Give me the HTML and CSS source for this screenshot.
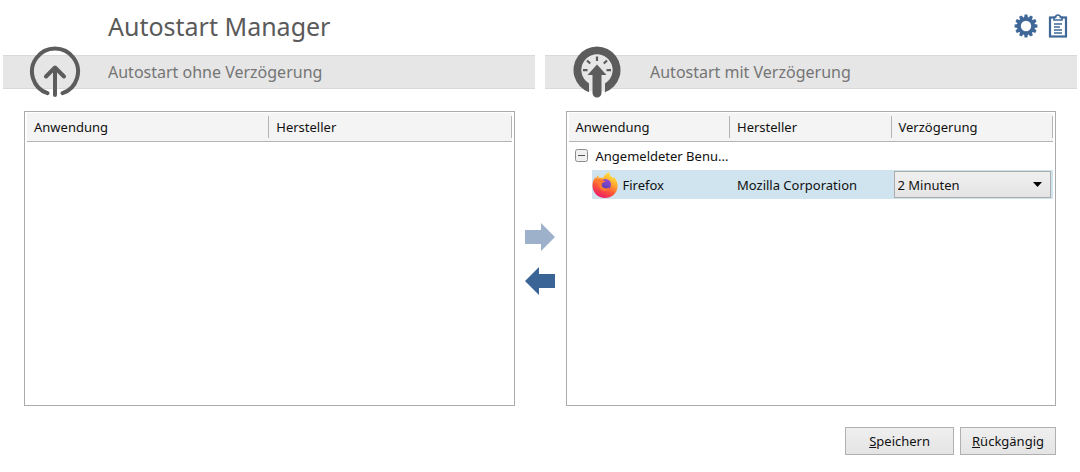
FILE: index.html
```html
<!DOCTYPE html>
<html lang="de">
<head>
<meta charset="utf-8">
<meta name="viewport" content="width=device-width, initial-scale=1">
<title>Autostart Manager</title>
<link rel="stylesheet" href="styles.css">
</head>
<body>
<header class="topbar">
  <h1 class="title">Autostart Manager</h1>
  <button class="icon-button" type="button" aria-label="Einstellungen">
    <svg width="24" height="24" viewBox="0 0 24 24">
      <g fill="#3f6899">
        <path d="M10 4 10.6 0.6H13.4L14 4V20L13.4 23.4H10.6L10 20Z"/>
        <path d="M10 4 10.6 0.6H13.4L14 4V20L13.4 23.4H10.6L10 20Z" transform="rotate(30 12 12)"/>
        <path d="M10 4 10.6 0.6H13.4L14 4V20L13.4 23.4H10.6L10 20Z" transform="rotate(60 12 12)"/>
        <path d="M10 4 10.6 0.6H13.4L14 4V20L13.4 23.4H10.6L10 20Z" transform="rotate(90 12 12)"/>
        <path d="M10 4 10.6 0.6H13.4L14 4V20L13.4 23.4H10.6L10 20Z" transform="rotate(120 12 12)"/>
        <path d="M10 4 10.6 0.6H13.4L14 4V20L13.4 23.4H10.6L10 20Z" transform="rotate(150 12 12)"/>
        <circle cx="12" cy="12" r="9"/>
      </g>
      <circle cx="12" cy="12" r="5.2" fill="#fff"/>
    </svg>
  </button>
  <button class="icon-button" type="button" aria-label="Protokoll">
    <svg width="20" height="24" viewBox="0 0 20 24" fill="none" stroke="#3f6899">
      <rect x="2" y="3.5" width="16" height="19" stroke-width="2.2"/>
      <path d="M6 3.4H7.6C7.6 0.2 12.4 0.2 12.4 3.4H14V6H6Z" fill="#fff" stroke-width="1.6"/>
      <path d="M6 10H14M6 13H12M6 16H14M6 19H14" stroke-width="1.5"/>
    </svg>
  </button>
</header>

<div class="bands">
  <div class="band">
    <svg class="band-icon" width="52" height="52" viewBox="0 0 52 52" fill="none" stroke="#5c5c5c" stroke-width="4" stroke-linecap="round" stroke-linejoin="round">
      <path d="M18.5 47.2A23 23 0 1 1 33.5 47.2"/>
      <path d="M26 49V22M17 30.5 26 21.5 35 30.5"/>
    </svg>
    <h2 class="band-title">Autostart ohne Verzögerung</h2>
  </div>
  <div class="band">
    <svg class="band-icon" width="52" height="52" viewBox="0 0 52 52">
      <path d="M18 46.2A23.5 23.5 0 1 1 34 46.2V36.6A15.2 15.2 0 1 0 18 36.6Z" fill="#5c5c5c"/>
      <circle cx="26" cy="24" r="15.6" fill="#e6e6e6"/>
      <path d="M18 36H34V46L26 43 18 46Z" fill="#e6e6e6"/>
      <path d="M26 10.500V15M16 14.500 19.200 17.500M36 14.500 32.800 17.500M12 24.200H16.500M40 24.200H35.500" stroke="#5c5c5c" stroke-width="2.2"/>
      <path d="M26 18.500 35.500 29H30.500V47A4.500 4.500 0 0 1 21.500 47V29H16.500Z" fill="#5c5c5c"/>
    </svg>
    <h2 class="band-title">Autostart mit Verzögerung</h2>
  </div>
</div>

<main class="lists">
  <section class="list">
    <table class="grid">
      <thead>
        <tr><th scope="col">Anwendung</th><th scope="col">Hersteller</th></tr>
      </thead>
    </table>
  </section>
  <div class="transfer">
    <button class="arrow" type="button" disabled aria-label="Nach rechts verschieben">
      <svg width="30" height="28" viewBox="0 0 30 28"><path d="M0 7H16V0L30 14 16 28V21H0Z" fill="#9db1cb"/></svg>
    </button>
    <button class="arrow" type="button" aria-label="Nach links verschieben">
      <svg width="30" height="28" viewBox="0 0 30 28"><path d="M30 7H14V0L0 14 14 28V21H30Z" fill="#3a6496"/></svg>
    </button>
  </div>
  <section class="list">
    <table class="grid">
      <thead>
        <tr><th scope="col">Anwendung</th><th scope="col">Hersteller</th><th scope="col">Verzögerung</th></tr>
      </thead>
      <tbody>
        <tr>
          <td class="group-cell">
            <div class="group">
              <button class="toggle" type="button" aria-label="Gruppe zuklappen">
                <svg width="13" height="13" viewBox="0 0 13 13"><rect x="0.5" y="0.5" width="12" height="12" rx="2" fill="#f0f0f0" stroke="#8c8c8c"/><path d="M3 6.5H10" stroke="#555"/></svg>
              </button>
              <span>Angemeldeter Benu...</span>
            </div>
          </td>
          <td></td><td></td>
        </tr>
        <tr class="selected">
          <td class="app-cell">
            <div class="app">
              <svg width="26" height="26" viewBox="0 0 26 26">
                <defs>
                  <linearGradient id="flame" x1="0.8" y1="0" x2="0.3" y2="1">
                    <stop offset="0" stop-color="#fff044"/><stop offset="0.35" stop-color="#ffb02e"/><stop offset="0.65" stop-color="#ff5a36"/><stop offset="1" stop-color="#e8186c"/>
                  </linearGradient>
                  <linearGradient id="globe" x1="0.7" y1="0" x2="0.3" y2="1">
                    <stop offset="0" stop-color="#9a48d8"/><stop offset="1" stop-color="#4b3fae"/>
                  </linearGradient>
                </defs>
                <path d="M17.5 0C17 3 19.5 4.500 21 6.500 21.500 5.500 21.500 5 21.300 4.500 24.500 7.500 26 11 25.600 15 25 21.500 19.500 26 13 26 6 26 0.500 20.500 0.500 13.500 0.500 10 1.500 7.500 3.500 5L4 7C4.500 5 5.500 4 6.500 3.300V6C8 5.500 9.500 5.600 11 6 12 3.500 14.500 1.200 17.500 0Z" fill="url(#flame)"/>
                <circle cx="13.500" cy="12.500" r="5.500" fill="url(#globe)"/>
                <path d="M4 8C6.500 6.500 9.500 7 11 8.500 12.500 8.500 13.500 9 13.500 9.600 12.500 10.600 10.500 10.600 9.800 11.800 9.500 14 10.500 15.800 13 16.300 15 16.600 16.500 16 17.500 15.500 16.500 18.500 13.500 19.500 10.500 18.500 7 17 6.500 11.500 4 8Z" fill="#ff7a33"/>
              </svg>
              <span>Firefox</span>
            </div>
          </td>
          <td>Mozilla Corporation</td>
          <td class="delay-cell">
            <div class="combo">
              <select class="combo-select" aria-label="Verzögerung">
                <option>2 Minuten</option>
              </select>
              <svg class="combo-arrow" width="9" height="5" viewBox="0 0 9 5"><path d="M0 0H9L4.500 5Z" fill="#000"/></svg>
            </div>
          </td>
        </tr>
      </tbody>
    </table>
  </section>
</main>

<footer class="actions">
  <button class="button save" type="button"><u>S</u>peichern</button>
  <button class="button" type="button"><u>R</u>ückgängig</button>
</footer>
</body>
</html>
```
FILE: styles.css
```css
* {
  box-sizing: border-box;
}

body {
  margin: 0;
  min-height: 100vh;
  display: flex;
  flex-direction: column;
  background: #fff;
  color: #111;
  font-family: "Noto Sans", "Open Sans", sans-serif;
  font-size: 13px;
}

svg {
  display: block;
}

button {
  font: inherit;
  color: inherit;
}

.topbar {
  display: flex;
  align-items: center;
  gap: 10px;
  height: 55px;
  padding: 0 12px 3px 108px;
}

.title {
  flex: 1;
  margin: 0;
  color: #5a5a5a;
  font-size: 25px;
  font-weight: 400;
}

.icon-button,
.arrow,
.toggle {
  padding: 0;
  border: 0;
  background: none;
}

.bands {
  display: grid;
  grid-template-columns: 1fr 1fr;
  gap: 10px;
  padding: 0 3px;
}

.band {
  display: flex;
  align-items: center;
  gap: 27px;
  height: 34px;
  padding-left: 26px;
  border: 1px solid #d9d9d9;
  border-width: 1px 0;
  background: #e6e6e6;
}

.band-icon {
  flex: none;
}

.band-title {
  margin: 0;
  color: #757575;
  font-size: 16px;
  font-weight: 400;
}

.lists {
  flex: 1;
  display: grid;
  grid-template-columns: 1fr 51px 1fr;
  padding: 22px 24px 0;
}

.list {
  padding: 1px 2px;
  border: 1px solid #ababab;
}

.transfer {
  display: flex;
  flex-direction: column;
  align-items: center;
  justify-content: center;
  gap: 16px;
}

.grid {
  width: 100%;
  table-layout: fixed;
  border-collapse: collapse;
}

.grid th {
  position: relative;
  height: 28px;
  padding: 0 7px;
  border-bottom: 1px solid #b4b4b4;
  background: #f4f4f4;
  font-weight: 400;
  text-align: left;
}

.grid th::after {
  content: "";
  position: absolute;
  top: 3px;
  right: 0;
  bottom: 3px;
  width: 1px;
  background: #b4b4b4;
}

.grid td {
  height: 29px;
  padding: 0 7px;
  white-space: nowrap;
}

.grid .group-cell {
  padding: 0 0 0 6px;
}

.group {
  display: flex;
  align-items: center;
  gap: 8px;
}

.selected td {
  background: #cfe4ee;
}

.selected .app-cell {
  padding: 0 0 0 23px;
  background-clip: content-box;
}

.app {
  display: flex;
  align-items: center;
  gap: 5px;
  height: 29px;
}

.grid .delay-cell {
  padding: 0 2px;
}

.combo {
  position: relative;
}

.combo-select {
  display: block;
  width: 100%;
  height: 27px;
  padding: 0 3px;
  border: 1px solid #acacac;
  border-radius: 0;
  background: linear-gradient(#f0f0f0, #e4e4e4);
  color: inherit;
  font: inherit;
  appearance: none;
}

.combo-arrow {
  position: absolute;
  top: 11px;
  right: 9px;
  pointer-events: none;
}

.actions {
  display: flex;
  justify-content: flex-end;
  gap: 6px;
  padding: 21px 24px 17px;
}

.button {
  height: 28px;
  padding: 0 11px;
  border: 1px solid #b0b0b0;
  background: linear-gradient(#efefef, #e4e4e4);
}

.save {
  padding: 0 23px;
}
```
